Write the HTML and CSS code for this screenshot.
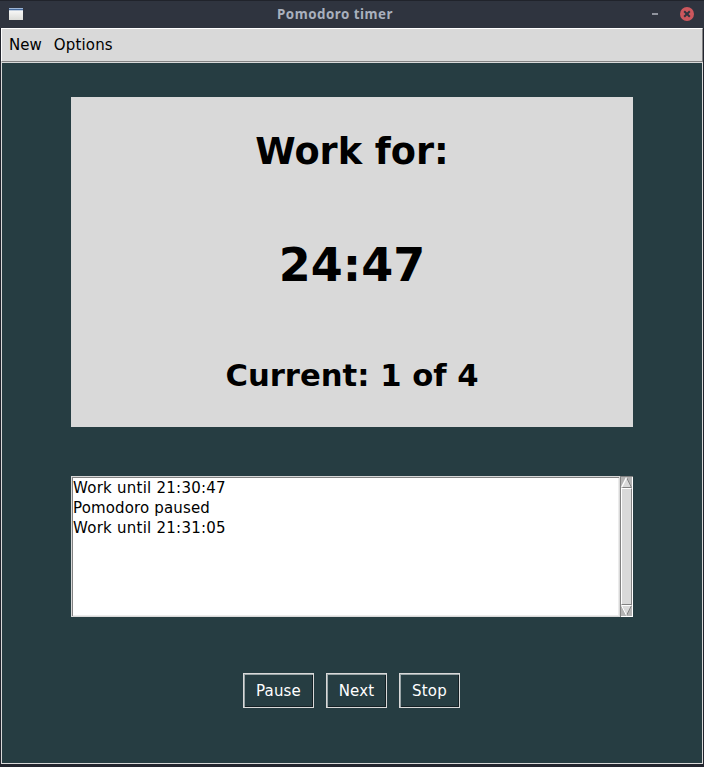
FILE: index.html
```html
<!DOCTYPE html>
<html lang="en">
<head>
<meta charset="utf-8">
<title>Pomodoro timer</title>
<link rel="stylesheet" href="styles.css">
</head>
<body>
<div class="window">
  <header class="titlebar">
    <svg class="app-icon" width="14" height="12" viewBox="0 0 14 12"><defs><linearGradient id="g" x2="0" y2="1"><stop stop-color="#fff"/><stop offset="1" stop-color="#dcdcd8"/></linearGradient></defs><rect width="14" height="12" fill="url(#g)"/><rect width="14" height="1" fill="#9fb6d6"/><rect y="1" width="14" height="1" fill="#456a9c"/><rect y="2" width="14" height="1" fill="#c3d0e0"/></svg>
    <h1 class="title">Pomodoro timer</h1>
    <svg class="controls" width="44" height="16" viewBox="0 0 44 16"><path d="M2 8h6" stroke="#90949e" stroke-width="2"/><circle cx="37" cy="8" r="7" fill="#cc575d"/><path d="M34.2 5.2l5.6 5.6m0-5.6l-5.6 5.6" stroke="#2f343f" stroke-width="2"/></svg>
  </header>
  <nav class="menubar"><span>New</span><span class="options">Options</span></nav>
  <main class="content">
    <section class="panel">
      <div class="status">Work for:</div>
      <div class="time">24:47</div>
      <div class="count">Current: 1 of 4</div>
    </section>
    <section class="log">
      <div class="lines"><div>Work until 21:30:47</div><div class="paused">Pomodoro paused</div><div>Work until 21:31:05</div></div>
      <div class="scrollbar">
        <svg width="11" height="11" viewBox="0 0 11 11"><path d="M5.5 .5L10.5 10.5H.5Z" fill="#d9d9d9"/><path d="M.5 10.5h10L5.5 .5" fill="none" stroke="#828282"/><path d="M.5 10.5L5.5 .5" stroke="#fff" stroke-width="1.4"/></svg>
        <div class="thumb"></div>
        <svg width="11" height="11" viewBox="0 0 11 11"><path d="M.5 .5h10L5.5 10.5Z" fill="#d9d9d9"/><path d="M5.5 10.5L10.5 .5" stroke="#828282"/><path d="M5.5 10.5L.5 .5h10" fill="none" stroke="#fff"/></svg>
      </div>
    </section>
    <div class="buttons"><button class="pause">Pause</button><button class="next">Next</button><button class="stop">Stop</button></div>
  </main>
</div>
</body>
</html>
```
FILE: styles.css
```css
* { box-sizing: border-box; }
body { margin: 0; background: #000; font-family: "DejaVu Sans", sans-serif; font-size: 15px; color: #000; }
.window { width: 704px; height: 767px; display: flex; flex-direction: column; background: #22252e; overflow: hidden; }
.titlebar { height: 28px; display: flex; align-items: center; padding: 0 10px 1px 9px; background: #2f343f; border-top: 1px solid #20232b; flex: none; }
.app-icon { flex: none; }
.title { flex: 1; margin: 0; padding-right: 3px; text-align: center; font: bold 13.33px/26px "Noto Sans", sans-serif; letter-spacing: .5px; color: #a9b0bd; }
.controls { flex: none; }
.menubar { height: 34px; display: flex; gap: 12px; margin: 0 1px; padding: 0 7px; line-height: 32px; background: #d9d9d9; border: 1px solid #fff; border-right-color: #828282; border-bottom-color: #828282; flex: none; }
.options { letter-spacing: .18px; }
.content { flex: 1; display: flex; flex-direction: column; align-items: center; margin: 0 1px 3px; padding-top: 34px; background: #263d42; border: 1px solid #d9d9d9; }
.panel { width: 562px; height: 330px; background: #d9d9d9; text-align: center; font-weight: bold; }
.status { margin-top: 33px; font-size: 36.7px; line-height: 44px; }
.time { margin-top: 63px; font-size: 46px; line-height: 56px; }
.count { margin-top: 64px; font-size: 30.67px; line-height: 38px; }
.log { display: flex; width: 562px; height: 141px; margin-top: 49px; background: #d9d9d9; }
.lines { flex: 1; border: 1px solid #d9d9d9; background: #fff; box-shadow: inset 1px 1px #828282, inset -1px -1px #ececec; padding: 1px 1px 0; line-height: 20px; letter-spacing: .25px; }
.lines .paused { letter-spacing: .15px; }
.scrollbar { width: 13px; display: flex; flex-direction: column; padding: 1px; background: #b3b3b3; box-shadow: inset 1px 1px #828282, inset -1px -1px #fff; }
.scrollbar svg { flex: none; display: block; }
.thumb { flex: 1; background: #d9d9d9; border: 1px solid #fff; border-right-color: #828282; border-bottom-color: #828282; }
.buttons { display: flex; gap: 12px; margin: 56px 1px 0 0; }
button { height: 35px; padding: 0; background: #263d42; color: #fff; font: 15px "DejaVu Sans", sans-serif; letter-spacing: .2px; border: 1px solid #d9d9d9; box-shadow: inset 1px 1px #9aa5a7, inset -1px -1px #142024; }
.pause { width: 71px; }
.next, .stop { width: 61px; }
```
